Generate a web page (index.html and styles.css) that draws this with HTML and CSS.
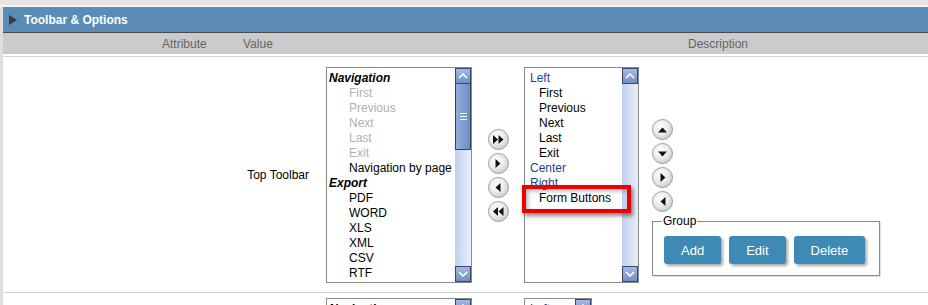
FILE: index.html
```html
<!DOCTYPE html>
<html lang="en">
<head>
    <meta charset="UTF-8">
    <title>Toolbar &amp; Options</title>
    <link rel="stylesheet" href="styles.css">
</head>
<body>
    <div class="topbar"></div>
    <div class="panel">
        <div class="panel-title"><span class="caret"></span>Toolbar &amp; Options</div>
        <div class="col-head">
            <span class="ch-attr">Attribute</span>
            <span class="ch-val">Value</span>
            <span class="ch-desc">Description</span>
        </div>

        <!-- Top toolbar row -->
        <div class="row">
            <div class="label">Top Toolbar</div>

            <div class="listbox list-avail">
                <ul class="items">
                    <li class="grp">Navigation</li>
                    <li class="off">First</li>
                    <li class="off">Previous</li>
                    <li class="off">Next</li>
                    <li class="off">Last</li>
                    <li class="off">Exit</li>
                    <li>Navigation by page</li>
                    <li class="grp">Export</li>
                    <li>PDF</li>
                    <li>WORD</li>
                    <li>XLS</li>
                    <li>XML</li>
                    <li>CSV</li>
                    <li>RTF</li>
                </ul>
                <div class="scroll">
                    <div class="sb-btn"><svg width="10" height="6" viewBox="0 0 10 6"><polyline points="1,5 5,1 9,5" fill="none" stroke="#fff" stroke-width="1.6"/></svg></div>
                    <div class="sb-track">
                        <div class="sb-thumb"><span class="grip"></span></div>
                    </div>
                    <div class="sb-btn"><svg width="10" height="6" viewBox="0 0 10 6"><polyline points="1,1 5,5 9,1" fill="none" stroke="#fff" stroke-width="1.6"/></svg></div>
                </div>
            </div>

            <div class="movers">
                <span class="rb"><svg width="11" height="9" viewBox="0 0 11 9"><path d="M0 0 L5 4.5 L0 9Z M5.5 0 L10.5 4.5 L5.5 9Z" fill="#111"/></svg></span>
                <span class="rb"><svg width="6" height="9" viewBox="0 0 6 9"><path d="M0.5 0 L5.5 4.5 L0.5 9Z" fill="#111"/></svg></span>
                <span class="rb"><svg width="6" height="9" viewBox="0 0 6 9"><path d="M5.5 0 L0.5 4.5 L5.5 9Z" fill="#111"/></svg></span>
                <span class="rb"><svg width="11" height="9" viewBox="0 0 11 9"><path d="M5 0 L0 4.5 L5 9Z M10.5 0 L5.5 4.5 L10.5 9Z" fill="#111"/></svg></span>
            </div>

            <div class="listbox list-sel">
                <ul class="items">
                    <li class="side-name">Left</li>
                    <li>First</li>
                    <li>Previous</li>
                    <li>Next</li>
                    <li>Last</li>
                    <li>Exit</li>
                    <li class="side-name">Center</li>
                    <li class="side-name">Right</li>
                    <li>Form Buttons</li>
                </ul>
                <div class="scroll">
                    <div class="sb-btn"><svg width="10" height="6" viewBox="0 0 10 6"><polyline points="1,5 5,1 9,5" fill="none" stroke="#fff" stroke-width="1.6"/></svg></div>
                    <div class="sb-track"></div>
                    <div class="sb-btn"><svg width="10" height="6" viewBox="0 0 10 6"><polyline points="1,1 5,5 9,1" fill="none" stroke="#fff" stroke-width="1.6"/></svg></div>
                </div>
                <div class="mark"></div>
            </div>

            <div class="side">
                <div class="order">
                    <span class="rb"><svg width="9" height="6" viewBox="0 0 9 6"><path d="M0 5.5 L4.5 0.5 L9 5.5Z" fill="#111"/></svg></span>
                    <span class="rb"><svg width="9" height="6" viewBox="0 0 9 6"><path d="M0 0.5 L4.5 5.5 L9 0.5Z" fill="#111"/></svg></span>
                    <span class="rb"><svg width="6" height="9" viewBox="0 0 6 9"><path d="M0.5 0 L5.5 4.5 L0.5 9Z" fill="#111"/></svg></span>
                    <span class="rb"><svg width="6" height="9" viewBox="0 0 6 9"><path d="M5.5 0 L0.5 4.5 L5.5 9Z" fill="#111"/></svg></span>
                </div>
                <fieldset class="group">
                    <legend>Group</legend>
                    <button class="btn">Add</button>
                    <button class="btn">Edit</button>
                    <button class="btn">Delete</button>
                </fieldset>
            </div>
        </div>

        <!-- next row, cut off by the window -->
        <div class="row row-next">
            <div class="label"></div>
            <div class="listbox list-avail">
                <ul class="items">
                    <li class="grp">Navigation</li>
                </ul>
                <div class="scroll">
                    <div class="sb-btn"><svg width="10" height="6" viewBox="0 0 10 6"><polyline points="1,5 5,1 9,5" fill="none" stroke="#fff" stroke-width="1.6"/></svg></div>
                    <div class="sb-track"></div>
                </div>
            </div>
            <div class="movers"></div>
            <div class="listbox list-small">
                <ul class="items">
                    <li class="side-name">Left</li>
                </ul>
                <div class="scroll">
                    <div class="sb-btn"><svg width="10" height="6" viewBox="0 0 10 6"><polyline points="1,5 5,1 9,5" fill="none" stroke="#fff" stroke-width="1.6"/></svg></div>
                    <div class="sb-track"></div>
                </div>
            </div>
        </div>
    </div>
</body>
</html>
```

FILE: styles.css
```css
html, body {
    margin: 0;
    padding: 0;
    height: 305px;
    overflow: hidden;
}
body {
    font-family: "Liberation Sans", Arial, sans-serif;
    font-size: 12px;
    background-color: #ffffff;
    color: #000000;
}
.topbar {
    height: 5px;
    background-color: #e6e3e3;
    border-bottom: 2px solid #f3f3f3;
}
.panel {
    border-left: 3px solid #dedede;
}
.panel-title {
    height: 25px;
    background-color: #5a8cb7;
    border-bottom: 1px solid #4b4b4b;
    color: #ffffff;
    font-weight: bold;
    font-size: 12px;
    display: flex;
    align-items: center;
    padding-left: 6px;
}
.caret {
    width: 0;
    height: 0;
    border-top: 5px solid transparent;
    border-bottom: 5px solid transparent;
    border-left: 8px solid #3c3c3c;
    margin-right: 7px;
}
.col-head {
    height: 21px;
    background-color: #cbcbcb;
    border-bottom: 2px solid #ffffff;
    color: #666666;
    display: flex;
    align-items: center;
    padding-left: 159px;
}
.ch-attr {
    width: 81px;
}
.ch-val {
    width: 445px;
}
.row {
    display: flex;
    border-top: 1px solid #d6d6d6;
    border-bottom: 1px solid #cfcfcf;
    padding: 10px 0 9px 0;
}
.row-next {
    border-top: none;
    border-bottom: none;
    padding-top: 5px;
}
.label {
    width: 306px;
    padding-right: 17px;
    display: flex;
    align-items: center;
    justify-content: flex-end;
}
.listbox {
    position: relative;
    display: flex;
    height: 216px;
    box-sizing: border-box;
    border: 1px solid #8a8a8a;
    background-color: #ffffff;
}
.list-avail {
    width: 146px;
}
.list-sel {
    width: 115px;
}
.list-small {
    width: 68px;
}
.items {
    flex: 1;
    list-style: none;
    margin: 0;
    padding: 3px 0 0 0;
    line-height: 15px;
}
.list-avail li {
    padding-left: 22px;
    white-space: nowrap;
}
.list-avail li.grp {
    padding-left: 2px;
    font-weight: bold;
    font-style: italic;
}
.list-avail li.off {
    color: #b0b0b0;
}
.list-sel li,
.list-small li {
    padding-left: 14px;
    white-space: nowrap;
}
.list-sel li.side-name,
.list-small li.side-name {
    padding-left: 5px;
    color: #1e3f8c;
}
.scroll {
    width: 16px;
    display: flex;
    flex-direction: column;
}
.sb-btn {
    height: 14px;
    flex-shrink: 0;
    background: linear-gradient(#a3b9e0, #7290c6);
    border: 1px solid #3a4868;
    display: flex;
    align-items: center;
    justify-content: center;
}
.sb-track {
    flex: 1;
    background: linear-gradient(to right, #bfd0ee, #e9eff9);
}
.sb-thumb {
    height: 65px;
    background: linear-gradient(to right, #93aedb, #6e8dc5);
    border: 1px solid #34415c;
    border-top: none;
    display: flex;
    align-items: center;
    justify-content: center;
}
.grip {
    width: 7px;
    height: 5px;
    border-top: 1px solid #ffffff;
    border-bottom: 1px solid #ffffff;
    position: relative;
}
.grip::after {
    content: "";
    position: absolute;
    left: 0;
    right: 0;
    top: 2px;
    border-top: 1px solid #ffffff;
}
.mark {
    position: absolute;
    left: -3px;
    top: 117px;
    width: 109px;
    height: 28px;
    box-sizing: border-box;
    border: 4px solid #ee0000;
    box-shadow: 2px 3px 4px rgba(0, 0, 0, 0.45), inset 2px 2px 4px rgba(0, 0, 0, 0.3);
    z-index: 2;
}
.movers {
    width: 52px;
    display: flex;
    flex-direction: column;
    align-items: center;
    justify-content: center;
    gap: 3px;
}
.rb {
    width: 21px;
    height: 21px;
    box-sizing: border-box;
    border-radius: 50%;
    border: 1px solid #9c9c9c;
    background: radial-gradient(circle at 40% 35%, #ffffff 0%, #ececec 45%, #b4b4b4 100%);
    display: flex;
    align-items: center;
    justify-content: center;
}
.side {
    padding-left: 13px;
}
.order {
    margin-top: 52px;
    display: flex;
    flex-direction: column;
    gap: 3px;
}
.group {
    margin: 2px 0 0 0;
    width: 228px;
    box-sizing: border-box;
    border: 1px solid #8a8a8a;
    box-shadow: 1px 1px 0 #dddddd;
    padding: 8px 10px 11px 11px;
    display: flex;
    gap: 8px;
}
.group legend {
    padding: 0 1px;
    margin-left: -2px;
    font-size: 12px;
    line-height: 14px;
}
.btn {
    height: 28px;
    padding: 0 17px;
    background-color: #3f8ab4;
    color: #ffffff;
    border: none;
    border-radius: 3px;
    font-family: "Liberation Sans", Arial, sans-serif;
    font-size: 13px;
    box-shadow: 2px 2px 3px rgba(0, 0, 0, 0.35);
    cursor: pointer;
}
```
